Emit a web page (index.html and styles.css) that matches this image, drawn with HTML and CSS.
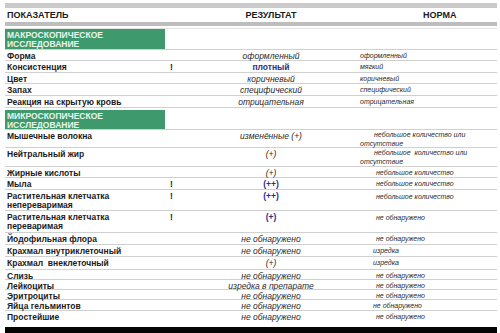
FILE: index.html
```html
<!DOCTYPE html>
<html lang="ru">
<head>
<meta charset="utf-8">
<title>Копрограмма</title>
<link rel="stylesheet" href="styles.css">
</head>
<body>
<div class="sheet">
  <div class="bar-top"></div>
  <div class="row head">
    <div class="name">ПОКАЗАТЕЛЬ</div>
    <div></div>
    <div class="res">РЕЗУЛЬТАТ</div>
    <div class="norm head-norm">НОРМА</div>
  </div>
  <div class="bar-mid"></div>
  <div class="bar-thin"></div>

  <div class="section s1"><div class="label">МАКРОСКОПИЧЕСКОЕ<br>ИССЛЕДОВАНИЕ</div></div>
  <div class="row h11"><div class="name">Форма</div><div class="mark"></div><div class="res">оформленный</div><div class="norm">оформленный</div></div>
  <div class="row h12"><div class="name">Консистенция</div><div class="mark">!</div><div class="res blue">плотный</div><div class="norm">мягкий</div></div>
  <div class="row h11"><div class="name">Цвет</div><div class="mark"></div><div class="res">коричневый</div><div class="norm">коричневый</div></div>
  <div class="row h12"><div class="name">Запах</div><div class="mark"></div><div class="res">специфический</div><div class="norm">специфический</div></div>
  <div class="row h12"><div class="name">Реакция на скрытую кровь</div><div class="mark"></div><div class="res">отрицательная</div><div class="norm">отрицательная</div></div>

  <div class="section s2"><div class="label">МИКРОСКОПИЧЕСКОЕ<br>ИССЛЕДОВАНИЕ</div></div>
  <div class="row h18 multi"><div class="name">Мышечные волокна</div><div class="mark"></div><div class="res">изменённые (+)</div><div class="norm indent">небольшое количество или отсутствие</div></div>
  <div class="row h19 multi"><div class="name">Нейтральный жир</div><div class="mark"></div><div class="res">(+)</div><div class="norm indent">небольшое&nbsp; количество или отсутствие</div></div>
  <div class="row h11"><div class="name">Жирные кислоты</div><div class="mark"></div><div class="res">(+)</div><div class="norm low">небольшое количество</div></div>
  <div class="row h12"><div class="name">Мыла</div><div class="mark">!</div><div class="res blue">(++)</div><div class="norm low">небольшое количество</div></div>
  <div class="row h21 multi"><div class="name">Растительная клетчатка<br>непереваримая</div><div class="mark">!</div><div class="res blue">(++)</div><div class="norm low">небольшое количество</div></div>
  <div class="row h22 multi"><div class="name">Растительная клетчатка<br>переваримая</div><div class="mark">!</div><div class="res blue">(+)</div><div class="norm low">не обнаружено</div></div>
  <div class="row h12"><div class="name">Йодофильная флора</div><div class="mark"></div><div class="res">не обнаружено</div><div class="norm low">не обнаружено</div></div>
  <div class="row h12"><div class="name">Крахмал внутриклеточный</div><div class="mark"></div><div class="res">не обнаружено</div><div class="norm mid">изредка</div></div>
  <div class="row h13"><div class="name">Крахмал&nbsp; внеклеточный</div><div class="mark"></div><div class="res">(+)</div><div class="norm mid">изредка</div></div>
  <div class="row h10"><div class="name">Слизь</div><div class="mark"></div><div class="res">не обнаружено</div><div class="norm low">не обнаружено</div></div>
  <div class="row h10"><div class="name">Лейкоциты</div><div class="mark"></div><div class="res">изредка в препарате</div><div class="norm low">не обнаружено</div></div>
  <div class="row h10"><div class="name">Эритроциты</div><div class="mark"></div><div class="res">не обнаружено</div><div class="norm low">не обнаружено</div></div>
  <div class="row h11"><div class="name">Яйца гельминтов</div><div class="mark"></div><div class="res">не обнаружено</div><div class="norm mid">не обнаружено</div></div>
  <div class="row h11 last"><div class="name">Простейшие</div><div class="mark"></div><div class="res">не обнаружено</div><div class="norm low">не обнаружено</div></div>
  <div class="bar-bottom"></div>
</div>
</body>
</html>
```
FILE: styles.css
```css
html, body {
  margin: 0;
  padding: 0;
  background: #ffffff;
}

body {
  font-family: "Liberation Sans", Arial, sans-serif;
  color: #1b1b1b;
}

.sheet {
  width: 492px;
  margin-left: 5px;
  padding-top: 3px;
}

.bar-top {
  height: 5px;
  background: #cacaca;
}

.bar-mid {
  height: 4px;
  background: #bdbdbd;
}

.bar-thin {
  margin-top: 2px;
  height: 1px;
  background: #e3e3e3;
}

.bar-bottom {
  margin-top: 5px;
  height: 6px;
  background: #050505;
}

.row {
  display: grid;
  grid-template-columns: 160px 30px 152px 1fr;
  box-sizing: border-box;
  border-bottom: 1px solid #d0d0d0;
  line-height: 10px;
  padding-top: 1px;
}

.row.last {
  border-bottom: none;
}

.row.head {
  height: 14px;
  padding-top: 0;
  border-bottom: none;
  align-items: center;
  font-weight: bold;
  line-height: 14px;
}

.row.head .name {
  font-size: 9px;
}

.row.head .res {
  font-style: normal;
  font-size: 9px;
  color: #1b1b1b;
}

.row.head .head-norm {
  font-style: normal;
  font-size: 9px;
  padding-left: 76px;
  color: #1b1b1b;
}

.h10 { height: 10px; }
.h11 { height: 11px; }
.h12 { height: 12px; }
.h13 { height: 13px; }
.h18 { height: 18px; }
.h19 { height: 19px; }
.h21 { height: 21px; }
.h22 { height: 22px; }

.row.multi {
  line-height: 9px;
  padding-top: 2px;
}

.name {
  padding-left: 2px;
  font-size: 8.5px;
  font-weight: bold;
  white-space: nowrap;
}

.mark {
  padding-left: 5px;
  font-size: 8.5px;
  font-weight: bold;
}

.res {
  text-align: center;
  font-size: 8.5px;
  font-style: italic;
  color: #2a2a2a;
}

.res.blue {
  font-style: normal;
  font-weight: bold;
  color: #2c2e8c;
}

.norm {
  padding-left: 13px;
  font-size: 7px;
  font-style: italic;
  color: #2a2a2a;
}

.norm.indent {
  text-indent: 14px;
  padding-right: 20px;
  margin-top: -2px;
}

.norm.low {
  padding-left: 29px;
}

.norm.mid {
  padding-left: 26px;
}

.section {
  box-sizing: border-box;
  border-bottom: 1px solid #d0d0d0;
}

.section.s1 {
  height: 21px;
}

.section.s2 {
  height: 22px;
  padding-top: 2px;
}

.label {
  width: 160px;
  box-sizing: border-box;
  height: 100%;
  padding: 2px 0 0 2px;
  background: #3e9a6c;
  color: #e8f6ec;
  font-size: 8.5px;
  font-weight: bold;
  line-height: 8.5px;
}
```
